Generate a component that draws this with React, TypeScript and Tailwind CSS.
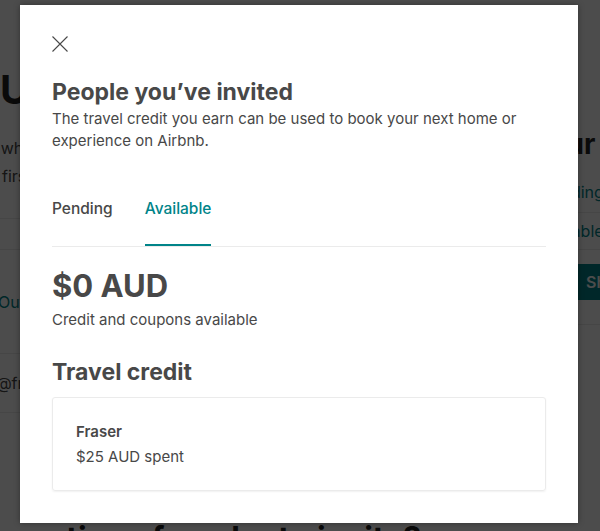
const font = { fontFamily: "Inter, 'Noto Sans', sans-serif" };

function BackgroundPage() {
  return (
    <div className="flex h-full w-full bg-white text-[#484848]">
      <div className="w-[532px] shrink-0">
        <h1 className="mt-[70px] whitespace-nowrap text-[40px] font-bold leading-[40px] text-[#222]">
          Up to $40
        </h1>
        <p className="ml-[-60px] mt-[24px] whitespace-nowrap text-[16px] leading-[28px]">
          Friends who join get a discount
          <br />
          on their first experience.
        </p>
        <div className="mt-[28px] border-t border-[#ebebeb]" />
        <div className="h-[31px] border-b border-[#ebebeb]" />
        <div className="ml-[-2px] flex h-[103px] items-center text-[16px] text-[#008489]">
          Outlook
        </div>
        <div className="border-t border-[#ebebeb]" />
        <div className="ml-[-40px] flex h-[58px] items-center text-[16px]">
          hello@fraser.com.au
        </div>
        <div className="border-t border-[#ebebeb]" />
        <h2 className="ml-[-52px] mt-[102px] whitespace-nowrap text-[32px] font-bold text-[#222]">
          Suggestions for who to invite?
        </h2>
      </div>
      <div className="w-[300px] shrink-0">
        <h2 className="mt-[128px] whitespace-nowrap text-[28px] font-bold leading-[32px] text-[#222]">
          Your travel credit
        </h2>
        <div className="ml-[10px] mt-[20px] pb-[8px] text-[16px] text-[#008489]">Pending</div>
        <div className="border-t border-[#ebebeb]" />
        <div className="ml-[4px] py-[6px] text-[16px] text-[#008489]">Available</div>
        <div className="border-t border-[#ebebeb]" />
        <button className="mt-[14px] h-[36px] w-[200px] rounded-[4px] bg-[#008489] pl-[54px] text-left text-[16px] font-semibold text-white">
          Share link
        </button>
        <div className="mt-[24px] border-t border-[#ebebeb]" />
      </div>
    </div>
  );
}

function TabButton({ label, active }: { label: string; active?: boolean }) {
  return (
    <button
      type="button"
      className={
        active
          ? "border-b-2 border-[#008489] pb-[24px] text-[15.5px] font-medium leading-[22px] text-[#008489]"
          : "border-b-2 border-transparent pb-[24px] text-[15.5px] font-medium leading-[22px] text-[#484848]"
      }
    >
      {label}
    </button>
  );
}

export default function App() {
  return (
    <div className="relative h-[531px] w-full overflow-hidden" style={font}>
      <BackgroundPage />
      <div className="absolute inset-0 bg-black/70 pl-[20px] pt-[5px]">
        <div className="flex h-[518px] w-[558px] flex-col bg-white px-[32px] pt-[31px] text-[#484848] shadow-[0_0_6px_rgba(0,0,0,0.35)]">
          <button type="button" className="h-[16px] w-[16px] text-[#484848]" aria-label="Close">
            <svg width="16" height="16" viewBox="0 0 16 16" fill="none" stroke="currentColor" strokeWidth="1.1">
              <path d="M0.5 0.5 L15.5 15.5 M15.5 0.5 L0.5 15.5" />
            </svg>
          </button>

          <h1 className="mt-[25px] text-[23px] font-bold leading-[30px]">People you’ve invited</h1>
          <p className="mt-[1px] text-[15px] leading-[22px]">
            The travel credit you earn can be used to book your next home or experience on Airbnb.
          </p>

          <div className="mt-[46px] flex gap-[32px] border-b border-[#ebebeb]">
            <TabButton label="Pending" />
            <TabButton label="Available" active />
          </div>

          <div className="mt-[21px] text-[31px] font-bold leading-[36px]">$0 AUD</div>
          <div className="mt-[5px] text-[15px] leading-[22px]">Credit and coupons available</div>

          <h2 className="mt-[26px] text-[23px] font-bold leading-[30px]">Travel credit</h2>

          <div className="mt-[10px] h-[94px] rounded-[3px] border border-[#ebebeb] px-[23px] pt-[23px] shadow-[0_1px_2px_rgba(0,0,0,0.06)]">
            <div className="text-[15px] font-semibold leading-[22px]">Fraser</div>
            <div className="mt-[3px] text-[15px] leading-[22px]">$25 AUD spent</div>
          </div>
        </div>
      </div>
    </div>
  );
}
